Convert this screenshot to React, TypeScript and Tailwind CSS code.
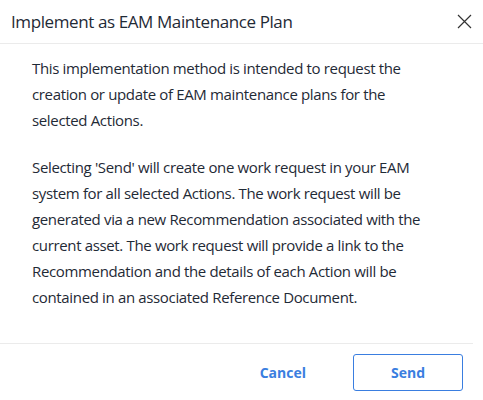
// Dialog: confirm implementing Actions as an EAM maintenance plan
export default function App() {
  return (
    <div className="h-[400px] w-[483px] bg-white font-['Open_Sans',sans-serif] text-[#1f2a36]">
      <div className="flex h-[44px] items-center justify-between border-b border-[#ebebeb] pl-[11px] pr-[11px]">
        <h1 className="text-[17px] leading-none tracking-[-0.4px]">Implement as EAM Maintenance Plan</h1>
        <button className="flex h-[16px] w-[16px] items-center justify-center text-[#333]">
          <svg width="15" height="15" viewBox="0 0 15 15" fill="none" stroke="currentColor" strokeWidth="1.2">
            <path d="M1 1L14 14M14 1L1 14" />
          </svg>
        </button>
      </div>

      <div className="h-[299px] pl-[32px] pr-[51px] pt-[11px] text-[15px] leading-[26px] tracking-[-0.35px]">
        <p>
          This implementation method is intended to request the creation or update of EAM maintenance plans for the
          selected Actions.
        </p>
        <p className="mt-[21px]">
          Selecting 'Send' will create one work request in your EAM system for all selected Actions. The work request
          will be generated via a new Recommendation associated with the current asset. The work request will provide
          a link to the Recommendation and the details of each Action will be contained in an associated Reference
          Document.
        </p>
      </div>

      <div className="mr-[10px] border-t border-[#ebebeb]" />
      <div className="flex items-center justify-end gap-[47px] pr-[20px] pt-[10px]">
        <button className="text-[14px] font-bold text-[#3a7ee0]">Cancel</button>
        <button className="h-[37px] w-[110px] rounded-[3px] border border-[#3a7ee0] text-[14px] font-bold text-[#3a7ee0]">
          Send
        </button>
      </div>
    </div>
  );
}
